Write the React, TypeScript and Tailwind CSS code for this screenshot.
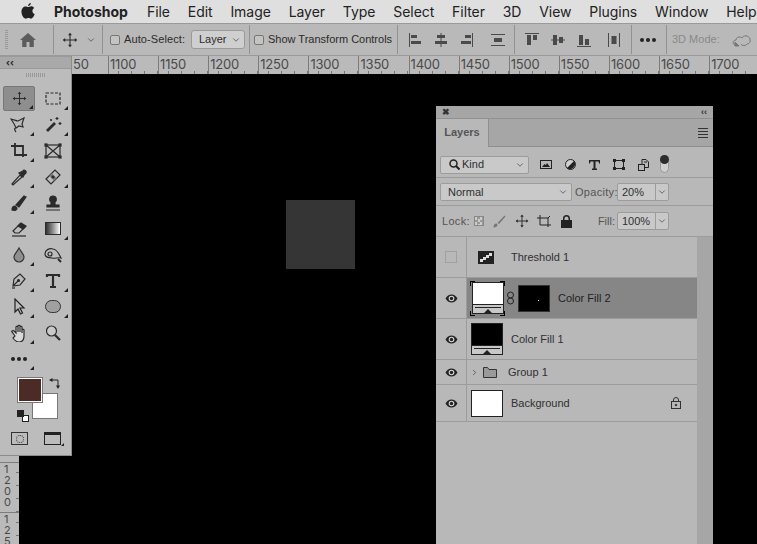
import type { ReactNode } from "react";
import { ChevronDown, ChevronRight } from "lucide-react";

const menuItems = ["File", "Edit", "Image", "Layer", "Type", "Select", "Filter", "3D", "View", "Plugins", "Window", "Help"];
const rulerLabels = ["1100", "1150", "1200", "1250", "1300", "1350", "1400", "1450", "1500", "1550", "1600", "1650", "1700"];

function Svg({ size = 18, className, children }: { size?: number; className?: string; children: ReactNode }) {
  return (
    <svg width={size} height={size} viewBox="0 0 18 18" fill="none" stroke="#2b2b2b" strokeWidth="1.2" className={className}>
      {children}
    </svg>
  );
}

function MoveIcon({ size = 18 }: { size?: number }) {
  return (
    <Svg size={size}>
      <path d="M9 2v14M2 9h14" />
      <path d="M9 .8 6.800 3.600h4.400zM9 17.200l-2.200-2.800h4.400zM.8 9l2.800-2.200v4.400zM17.200 9l-2.800-2.200v4.400z" fill="#2b2b2b" stroke="none" />
    </Svg>
  );
}

function Divider({ ml, mr }: { ml: string; mr: string }) {
  return <span className={`h-[29px] w-px bg-[#929292] ${ml} ${mr}`} />;
}

function Checkbox() {
  return <span className="h-[10px] w-[10px] rounded-[2px] border border-[#777] bg-[#c4c4c4]" />;
}

function AlignIcon({ children, className }: { children: ReactNode; className?: string }) {
  return (
    <svg width={16} height={16} viewBox="0 0 16 16" fill="#4a4a4a" stroke="none" className={className}>
      {children}
    </svg>
  );
}

function Dots() {
  return (
    <span className="flex gap-[2px]">
      <i className="h-[4px] w-[4px] rounded-full bg-[#222]" />
      <i className="h-[4px] w-[4px] rounded-full bg-[#222]" />
      <i className="h-[4px] w-[4px] rounded-full bg-[#222]" />
    </span>
  );
}

function MenuBar() {
  return (
    <div className="flex h-[23px] shrink-0 items-center bg-[#dfdfdf] text-[14px] text-[#222] [&>*]:shrink-0">
      <svg width="14" height="16" viewBox="0 0 15 17" fill="#222" className="ml-[21px] -mt-[2px]">
        <path d="M10.600 0c.1 1.200-1.200 3.200-3 3.200C7.400 1.700 9 .2 10.600 0zM7.700 4.300c.8 0 1.800-.9 3.200-.9 1.300 0 2.500.7 3.200 1.800-2.800 1.700-2.300 5.400.6 6.600-.7 1.900-2.200 4.900-3.900 4.900-1 0-1.500-.7-2.800-.7s-1.800.7-2.800.7C3 16.700.5 12.700.5 9.200c0-3.400 2.100-5.600 4.400-5.600 1.200 0 2.100.7 2.800.7z" />
      </svg>
      <span className="ml-[19px] font-bold">Photoshop</span>
      <div className="ml-[19px] flex gap-[17.850px] tracking-[-0.05px]">
        {menuItems.map((item) => (
          <span key={item}>{item}</span>
        ))}
      </div>
    </div>
  );
}

function OptionsBar() {
  return (
    <div className="flex h-[33px] shrink-0 items-center overflow-hidden border-y border-[#9a9a9a] bg-[#b9b9b9] font-['Liberation_Sans',sans-serif] text-[11px] text-[#2b2b2b] [&>*]:shrink-0">
      <span className="ml-[5px] h-[19px] w-[3px] bg-[repeating-linear-gradient(#999_0_1px,transparent_1px_2px)]" />
      <svg width="16" height="14" viewBox="0 0 16 14" fill="#5c5c5c" className="ml-[12px]">
        <path d="M8 0 0 7h2.200v7h4.300V9h3v5h4.300V7H16z" />
      </svg>
      <Divider ml="ml-[17px]" mr="mr-[8px]" />
      <MoveIcon size={16} />
      <ChevronDown size={10} strokeWidth={1.5} className="ml-[8px] text-[#333]" />
      <Divider ml="ml-[6px]" mr="mr-[7px]" />
      <Checkbox />
      <span className="ml-[4px] w-[60px] whitespace-nowrap tracking-[0.1px]">Auto-Select:</span>
      <div className="ml-[7px] flex h-[19px] w-[54px] items-center justify-between rounded-[3px] border border-[#9a9a9a] bg-[#cfcfcf] pl-[7px] pr-[3px]">
        <span>Layer</span>
        <ChevronDown size={10} strokeWidth={1.5} />
      </div>
      <Divider ml="ml-[4px]" mr="mr-[4px]" />
      <Checkbox />
      <span className="ml-[4px] w-[123px] whitespace-nowrap">Show Transform Controls</span>
      <Divider ml="ml-[6px]" mr="mr-[10px]" />
      <div className="flex items-center gap-[9px]">
        <AlignIcon><path d="M1 1h1v14H1zM3 3h6v3H3zM3 9h10v3H3z" /></AlignIcon>
        <AlignIcon><path d="M7.500 1h1v14h-1zM4 3h8v3H4zM2 9h12v3H2z" /></AlignIcon>
        <AlignIcon><path d="M14 1h1v14h-1zM7 3h6v3H7zM3 9h10v3H3z" /></AlignIcon>
        <AlignIcon className="ml-[7px]"><path d="M1 2h14v1H1zM1 13h14v1H1zM4 6h8v4H4z" /></AlignIcon>
      </div>
      <Divider ml="ml-[8px]" mr="mr-[9px]" />
      <div className="flex items-center gap-[10px]">
        <AlignIcon><path d="M1 1h14v1H1zM3 3h4v10H3zM9 3h4v5H9z" /></AlignIcon>
        <AlignIcon><path d="M1 7.500h14v1H1zM3 3h4v10H3zM9 5h4v6H9z" /></AlignIcon>
        <AlignIcon><path d="M1 14h14v1H1zM3 3h4v10H3zM9 7h4v6H9z" /></AlignIcon>
        <AlignIcon className="ml-[4px]"><path d="M2 1h1v14H2zM13 1h1v14h-1zM5.500 4h5v8h-5z" /></AlignIcon>
      </div>
      <Divider ml="ml-[9px]" mr="mr-[8px]" />
      <Dots />
      <Divider ml="ml-[10px]" mr="mr-[5px]" />
      <span className="whitespace-nowrap text-[#8a8a8a]">3D Mode:</span>
      <svg width="20" height="16" viewBox="0 0 20 16" fill="none" stroke="#777" className="ml-[12px]">
        <path d="M3 13c-3-1-2-5 1-5 0-3 4-4 6-2 1-3 7-3 8 1 1 3-1 5-3 5-1 2-5 2-6 0" />
        <path d="M3 10v4h4z" fill="#777" />
      </svg>
      <span className="ml-[6px] h-[12px] w-[4px] rounded-full bg-[#777]" />
    </div>
  );
}

function RulerTicks() {
  return (
    <span className="absolute bottom-0 left-[9px] flex w-[40px] justify-between">
      <i className="h-[3px] w-px bg-[#777]" />
      <i className="h-[3px] w-px bg-[#777]" />
      <i className="h-[3px] w-px bg-[#777]" />
      <i className="h-[3px] w-px bg-[#777]" />
    </span>
  );
}

function TopRuler() {
  return (
    <div className="flex h-[18px] shrink-0 items-stretch overflow-hidden bg-[#bababa] pl-[73px] text-[#4a4a4a]">
      <div className="flex h-full w-[35px] shrink-0 items-start">
        <span className="text-[13px] leading-[17px] tracking-[-0.2px]">50</span>
      </div>
      {rulerLabels.map((label) => (
        <div key={label} className="relative flex h-full w-[50.100px] shrink-0 border-l border-[#7c7c7c] pl-[1px]">
          <span className="text-[13px] leading-[17px] tracking-[-0.2px]">{label}</span>
          <RulerTicks />
        </div>
      ))}
    </div>
  );
}

function LeftRuler() {
  const digits = (text: string) => (
    <div className="relative h-[50px] shrink-0 border-t border-[#7c7c7c] pl-[4px] pt-[1px] text-[11px] leading-[11px]">
      {text.split("").map((ch, i) => (
        <div key={i}>{ch}</div>
      ))}
      <span className="absolute right-0 top-[9px] flex h-[40px] flex-col justify-between">
        <i className="h-px w-[3px] bg-[#777]" />
        <i className="h-px w-[3px] bg-[#777]" />
        <i className="h-px w-[3px] bg-[#777]" />
        <i className="h-px w-[3px] bg-[#777]" />
      </span>
    </div>
  );
  return (
    <div className="flex w-[19px] shrink-0 flex-col justify-end overflow-hidden bg-[#bababa] text-[#4a4a4a]">
      {digits("1200")}
      <div className="h-[32px] shrink-0 overflow-hidden">{digits("125")}</div>
    </div>
  );
}

function Tool({ children, corner = true, active = false }: { children: ReactNode; corner?: boolean; active?: boolean }) {
  return (
    <div className={`relative flex h-[25px] w-[32px] items-center justify-center rounded-[2px] ${active ? "border border-[#777] bg-[#8e8e8e]" : ""}`}>
      {children}
      {corner && <span className="absolute bottom-[1px] right-[1px] h-0 w-0 border-b-[4px] border-l-[4px] border-b-[#222] border-l-transparent" />}
    </div>
  );
}

function ToolsPanel() {
  return (
    <div className="absolute left-0 top-[56px] h-[400px] w-[72px] border-b border-r border-[#8c8c8c] bg-[#bcbcbc]">
      <div className="flex h-[13px] items-center border-y border-[#9a9a9a] bg-[#a9a9a9] pl-[6px] text-[9px] font-bold leading-none text-[#222]">‹‹</div>
      <div className="mx-auto mt-[4px] h-[4px] w-[19px] bg-[repeating-linear-gradient(90deg,#999_0_1px,transparent_1px_2px)]" />
      <div className="ml-[3px] mt-[9px] grid grid-cols-[32px_32px] gap-x-[2px] gap-y-[1px]">
        <Tool active><MoveIcon size={15} /></Tool>
        <Tool>
          <Svg><rect x="2" y="3" width="14" height="11" strokeDasharray="3 1.5" /></Svg>
        </Tool>
        <Tool>
          <Svg><path d="M1 3c3 .5 5 2 7 2l6-3-2 6 1 3-4-1-3 2c-1-3-3-6-5-9zM5 12c-1 2 0 3 1 4" /></Svg>
        </Tool>
        <Tool>
          <Svg>
            <path d="m3 15 8-8" strokeWidth="2.8" />
            <path d="M13 1v3M11.500 2.500h3M16 6v3M14.500 7.500h3M7 3v2M6 4h2" />
          </Svg>
        </Tool>
        <Tool>
          <Svg><path d="M1 4h12v11M5 1v12h12" strokeWidth="1.8" /></Svg>
        </Tool>
        <Tool corner={false}>
          <Svg>
            <rect x="2" y="3" width="14" height="12" />
            <path d="m2 3 14 12M16 3 2 15" />
            <rect x="1" y="2" width="2" height="2" fill="#2b2b2b" /><rect x="15" y="2" width="2" height="2" fill="#2b2b2b" /><rect x="1" y="14" width="2" height="2" fill="#2b2b2b" /><rect x="15" y="14" width="2" height="2" fill="#2b2b2b" />
          </Svg>
        </Tool>
        <Tool>
          <Svg>
            <path d="m2 16 8-9 2 2-9 8z" fill="#bcbcbc" />
            <path d="m9 5 4 4 1-2 2-2c1-2-2-4-3-2l-2 1z" fill="#2b2b2b" />
          </Svg>
        </Tool>
        <Tool>
          <Svg>
            <path d="m2 11 9-9 5 5-9 9z" />
            <path d="m6.500 6.500 5 5" strokeWidth="3.5" stroke="#777" />
            <circle cx="9" cy="9" r="1" fill="#2b2b2b" />
          </Svg>
        </Tool>
        <Tool>
          <Svg><path d="M2 16c0-3 1-4 3-4l2 2c0 2-2 3-5 2z" fill="#2b2b2b" /><path d="m6 11 8-9 2 1-7 10z" fill="#2b2b2b" /></Svg>
        </Tool>
        <Tool corner={false}>
          <Svg><path d="M2 16h14M3 13h12v-2H11V8c2-1 2-6-2-6S5 7 7 8v3H3z" fill="#2b2b2b" /></Svg>
        </Tool>
        <Tool corner={false}>
          <Svg><path d="m3 11 7-7 5 3-6 6H5z" /><path d="m8 6 3-3 5 3-3 3z" fill="#2b2b2b" /><path d="M2 16h14" /></Svg>
        </Tool>
        <Tool>
          <div className="h-[13px] w-[16px] border border-[#2b2b2b] bg-gradient-to-r from-[#333] to-white" />
        </Tool>
        <Tool>
          <Svg><path d="M9 2c-2 4-5 6-5 9a5 5 0 0 0 10 0c0-3-3-5-5-9z" fill="#8f8f8f" stroke="#333" /></Svg>
        </Tool>
        <Tool corner={false}>
          <Svg><path d="M1 8c0-4 4-6 8-5 4 0 6 5 8 9-3-1-6 1-9 0-3 0-7-1-7-4z" /><circle cx="6" cy="8" r="2" /><path d="m14 13 3 3" strokeWidth="2" /></Svg>
        </Tool>
        <Tool>
          <Svg><path d="m3 14 1-7 6-5 5 5-5 6zM3 14l5-5" /><path d="M2 16h3" /><circle cx="8.500" cy="8.500" r="1" fill="#2b2b2b" /></Svg>
        </Tool>
        <Tool>
          <Svg><path d="M3 5V3h12v2M9 3v12M6 15h6" strokeWidth="2.2" /></Svg>
        </Tool>
        <Tool>
          <Svg><path d="M5 1v13l3-3 2.500 5 2-1-2.500-5h4z" fill="#bcbcbc" stroke="#222" /></Svg>
        </Tool>
        <Tool>
          <span className="h-[13px] w-[16px] rounded-full border border-[#333] bg-[#a0a0a0]" />
        </Tool>
        <Tool>
          <Svg><path d="M5 12 2 8c-1-1 1-2 2-1l2 2V3c0-1 2-1 2 0v5-6c0-1 2-1 2 0v6-5c0-1 2-1 2 0v6-3c0-1 2-1 2 0v6c0 4-2 6-5 6s-4-1-6-4z" fill="#d8d8d8" /></Svg>
        </Tool>
        <Tool corner={false}>
          <Svg><circle cx="7.500" cy="7" r="5" fill="#c9c9c9" /><path d="m11 11 5 5" strokeWidth="2.2" /></Svg>
        </Tool>
        <Tool><Dots /></Tool>
      </div>
      <div className="relative mt-[7px] h-[44px]">
        <span className="absolute left-[32px] top-[15px] h-[26px] w-[26px] border border-[#777] bg-white" />
        <span className="absolute left-[18px] top-0 h-[24px] w-[24px] border border-white bg-[#4c2a26] outline outline-[#777]" />
        <svg width="11" height="11" viewBox="0 0 11 11" fill="none" stroke="#222" className="absolute left-[49px] top-0">
          <path d="M3 2h6v6" />
          <path d="M0 2 3.500 0v4zM9 11 7 7.500h4z" fill="#222" stroke="none" />
        </svg>
        <span className="absolute left-[22px] top-[37px] h-[7px] w-[7px] border border-[#222] bg-white" />
        <span className="absolute left-[17px] top-[32px] h-[7px] w-[7px] bg-[#222]" />
      </div>
      <div className="ml-[11px] mt-[10px] flex items-center gap-[16px]">
        <span className="flex h-[13px] w-[17px] items-center justify-center border border-[#333]">
          <i className="h-[8px] w-[8px] rounded-full border border-dotted border-[#333]" />
        </span>
        <span className="relative h-[13px] w-[17px] border border-t-[3px] border-[#222]">
          <i className="absolute -bottom-[2px] -right-[4px] h-0 w-0 border-b-[3px] border-l-[3px] border-b-[#222] border-l-transparent" />
        </span>
      </div>
    </div>
  );
}

function Eye() {
  return (
    <svg width="13" height="9" viewBox="0 0 13 9" className="ml-[1px]">
      <path d="M.5 4.500C2 2 4 .5 6.500.5s4.500 1.500 6 4c-1.500 2.500-3.500 4-6 4s-4.500-1.500-6-4z" fill="#222" />
      <circle cx="6.500" cy="4.500" r="2.800" fill="#d8d8d8" />
      <circle cx="6.500" cy="4.500" r="1.700" fill="#222" />
    </svg>
  );
}

function FillThumb({ fill }: { fill: string }) {
  return (
    <div className="flex h-[32px] w-[32px] flex-col border border-[#222] bg-[#c8c8c8]">
      <div className={`h-[22px] shrink-0 border-b border-[#222] ${fill}`} />
      <div className="mx-[2px] mt-[2px] h-px shrink-0 bg-[#222]" />
      <svg width="8" height="4" viewBox="0 0 8 4" fill="#222" className="mx-auto mt-[1px] shrink-0">
        <path d="M4 0 8 4H0z" />
      </svg>
    </div>
  );
}

function LayerRow({ h, eye = true, selected = false, children }: { h: string; eye?: boolean; selected?: boolean; children: ReactNode }) {
  return (
    <div className={`flex ${h} border-b border-[#9c9c9c] ${selected ? "bg-[#868686]" : ""}`}>
      <div className="flex w-[31px] items-center justify-center border-r border-[#9c9c9c] bg-[#b8b8b8]">
        {eye ? <Eye /> : <span className="h-[12px] w-[12px] border border-[#a0a0a0]" />}
      </div>
      <div className="flex flex-1 items-center">{children}</div>
    </div>
  );
}

function LayersPanel() {
  return (
    <div className="absolute left-[436px] top-[106px] flex h-[438px] w-[277px] flex-col rounded-t-[3px] bg-[#b8b8b8] font-['Liberation_Sans',sans-serif] text-[11px] text-[#303030]">
      <div className="flex h-[13px] shrink-0 items-center justify-between border-b border-[#909090] bg-[#a6a6a6] px-[6px] text-[9px] font-bold leading-none text-[#333]">
        <span>✖</span>
        <span>‹‹</span>
      </div>
      <div className="flex h-[28px] shrink-0 border-b border-[#8f8f8f] bg-[#a6a6a6]">
        <div className="-mb-px flex w-[53px] items-center justify-center border-r border-[#8f8f8f] bg-[#b8b8b8] pb-[2px] font-bold text-[#555]">Layers</div>
        <div className="ml-auto mr-[5px] flex flex-col justify-center gap-[2px]">
          <i className="h-px w-[10px] bg-[#333]" />
          <i className="h-px w-[10px] bg-[#333]" />
          <i className="h-px w-[10px] bg-[#333]" />
          <i className="h-px w-[10px] bg-[#333]" />
        </div>
      </div>
      <div className="flex h-[31px] shrink-0 items-center border-b border-[#9c9c9c] pl-[4px] pt-[5px]">
        <div className="flex h-[18px] w-[89px] items-center rounded-[2px] border border-[#9c9c9c] bg-[#c9c9c9] pl-[8px] pr-[3px]">
          <svg width="11" height="11" viewBox="0 0 11 11" fill="none" stroke="#222" strokeWidth="1.5">
            <circle cx="4.500" cy="4.500" r="3.500" />
            <path d="m7 7 3.500 3.500" strokeWidth="2" />
          </svg>
          <span className="ml-[2px]">Kind</span>
          <ChevronDown size={10} strokeWidth={1.5} className="ml-auto" />
        </div>
        <div className="ml-[11px] flex items-center gap-[13px]">
          <svg width="12" height="9" viewBox="0 0 12 9" fill="none" stroke="#222"><rect x=".5" y=".5" width="11" height="8" /><path d="m2 7 2.500-3L6 5l1-2 3 4z" fill="#222" stroke="none" /></svg>
          <svg width="11" height="11" viewBox="0 0 11 11"><circle cx="5.500" cy="5.500" r="5" fill="#d0d0d0" stroke="#222" /><path d="M9 2A5 5 0 0 1 2 9z" fill="#222" /></svg>
          <svg width="11" height="10" viewBox="0 0 11 10" fill="#222"><path d="M0 0h11v3.500h-1L9.500 1.500H6.500v7H8V10H3V8.500h1.500v-7H1.500L1 3.500H0z" /></svg>
          <svg width="12" height="11" viewBox="0 0 12 11" fill="none" stroke="#222"><rect x="1.500" y="1.500" width="9" height="8" /><rect x=".5" y=".5" width="2" height="2" fill="#222" /><rect x="9.500" y=".5" width="2" height="2" fill="#222" /><rect x=".5" y="8.500" width="2" height="2" fill="#222" /><rect x="9.500" y="8.500" width="2" height="2" fill="#222" /></svg>
          <svg width="11" height="12" viewBox="0 0 11 12" fill="none" stroke="#222"><path d="M4 5V.5h4l2.500 2.500v5.500H7" /><rect x=".5" y="5.500" width="6" height="6" /><path d="M6 3h3" /></svg>
        </div>
        <div className="relative -mt-[2px] ml-[11px] flex h-[18px] w-[9px] rounded-full border border-[#999] bg-[#cfcfcf]">
          <i className="absolute -left-px -top-px h-[9px] w-[9px] rounded-full bg-[#2c2c2c]" />
        </div>
      </div>
      <div className="flex h-[28px] shrink-0 items-center border-b border-[#9c9c9c] pl-[4px] pt-[1px]">
        <div className="flex h-[18px] w-[132px] items-center justify-between rounded-[2px] border border-[#9c9c9c] bg-[#c9c9c9] pl-[7px] pr-[3px]">
          <span>Normal</span>
          <ChevronDown size={10} strokeWidth={1.5} />
        </div>
        <span className="ml-[3px] w-[41px] tracking-[0.3px] text-[#555]">Opacity:</span>
        <div className="ml-[1px] flex h-[18px] w-[52px] items-center rounded-[2px] border border-[#9c9c9c] bg-[#c9c9c9]">
          <span className="w-[37px] pl-[4px]">20%</span>
          <span className="flex h-full flex-1 items-center justify-center border-l border-[#9c9c9c]"><ChevronDown size={10} strokeWidth={1.5} /></span>
        </div>
      </div>
      <div className="flex h-[31px] shrink-0 items-center border-b border-[#9c9c9c] pl-[6px]">
        <span className="w-[25px] tracking-[0.3px] text-[#555]">Lock:</span>
        <span className="ml-[7px] h-[10px] w-[10px] border border-[#888] bg-[conic-gradient(#999_25%,#ccc_0_50%,#999_0_75%,#ccc_0)] bg-[length:5px_5px]" />
        <svg width="13" height="13" viewBox="0 0 13 13" fill="#777" className="ml-[9px]"><path d="M.5 12.500c0-3 1-4 3-4l1 1c0 2-1.500 3-4 3zM4.500 8l7-7.500 1 1L6 9z" /></svg>
        <span className="ml-[9px] flex"><MoveIcon size={14} /></span>
        <svg width="14" height="13" viewBox="0 0 14 13" fill="none" stroke="#222" className="ml-[8px]"><path d="M0 3h11v9M3 0v10h11M11 3l2-2" /></svg>
        <svg width="11" height="13" viewBox="0 0 11 13" fill="#222" className="ml-[10px]"><path d="M2 5V3.500a3.500 3.500 0 0 1 7 0V5h2v8H0V5zm1.500 0h4V3.500a2 2 0 0 0-4 0z" fillRule="evenodd" /></svg>
        <span className="ml-auto text-[#555]">Fill:</span>
        <div className="ml-[2px] mr-[44px] flex h-[18px] w-[52px] items-center rounded-[2px] border border-[#9c9c9c] bg-[#c9c9c9]">
          <span className="w-[37px] pl-[4px]">100%</span>
          <span className="flex h-full flex-1 items-center justify-center border-l border-[#9c9c9c]"><ChevronDown size={10} strokeWidth={1.5} /></span>
        </div>
      </div>
      <div className="flex flex-1">
        <div className="flex-1">
          <LayerRow h="h-[41px]" eye={false}>
            <svg width="16" height="13" viewBox="0 0 16 13" className="ml-[11px]">
              <rect width="16" height="13" fill="#222" />
              <path d="M2 11V8h3V6h3V4h3V2h3v3h-3v2H8v2H5v2z" fill="#ddd" />
            </svg>
            <span className="ml-[17px]">Threshold 1</span>
          </LayerRow>
          <LayerRow h="h-[41px]" selected>
            <div className="relative ml-[3px] flex h-[35px] w-[35px] items-center justify-center">
              <FillThumb fill="bg-white" />
              <i className="absolute left-0 top-0 h-[5px] w-[5px] border-l border-t border-black" />
              <i className="absolute right-0 top-0 h-[5px] w-[5px] border-r border-t border-black" />
              <i className="absolute bottom-0 left-0 h-[5px] w-[5px] border-b border-l border-black" />
              <i className="absolute bottom-0 right-0 h-[5px] w-[5px] border-b border-r border-black" />
            </div>
            <svg width="9" height="14" viewBox="0 0 9 14" fill="none" stroke="#222" className="ml-[1px]">
              <rect x="1.500" y="1" width="6" height="6" rx="3" />
              <rect x="1.500" y="7" width="6" height="6" rx="3" />
            </svg>
            <div className="relative ml-[3px] h-[27px] w-[32px] border border-[#333] bg-black">
              <i className="absolute left-[19px] top-[14px] h-px w-px bg-white" />
            </div>
            <span className="ml-[8px] text-[#222]">Color Fill 2</span>
          </LayerRow>
          <LayerRow h="h-[41px]">
            <div className="ml-[4px] flex"><FillThumb fill="bg-black" /></div>
            <span className="ml-[8px]">Color Fill 1</span>
          </LayerRow>
          <LayerRow h="h-[25px]">
            <ChevronRight size={9} strokeWidth={1.5} className="ml-[3px] text-[#222]" />
            <svg width="14" height="11" viewBox="0 0 14 11" fill="#9a9a9a" stroke="#333" className="ml-[4px]">
              <path d="M.5 10.500v-10h4l1.500 2h7.500v8z" />
            </svg>
            <span className="ml-[11px]">Group 1</span>
          </LayerRow>
          <LayerRow h="h-[37px]">
            <div className="ml-[4px] h-[27px] w-[32px] border border-[#222] bg-white" />
            <span className="ml-[8px]">Background</span>
            <svg width="10" height="12" viewBox="0 0 10 12" fill="none" stroke="#333" className="ml-auto mr-[16px]">
              <rect x=".5" y="4.500" width="9" height="7" />
              <path d="M2.500 4.500V3a2.500 2.500 0 0 1 5 0v1.500" />
              <circle cx="5" cy="8" r=".8" fill="#333" />
            </svg>
          </LayerRow>
        </div>
        <div className="w-[16px] shrink-0 bg-[#a6a6a6]" />
      </div>
    </div>
  );
}

export default function App() {
  return (
    <div className="relative flex h-[544px] w-[757px] flex-col overflow-hidden bg-black font-['Inter','Liberation_Sans',sans-serif]">
      <MenuBar />
      <OptionsBar />
      <TopRuler />
      <div className="flex min-h-0 flex-1">
        <LeftRuler />
        <div className="relative flex-1 bg-black">
          <div className="absolute left-[267px] top-[126px] h-[69px] w-[69px] bg-[#353535]" />
        </div>
      </div>
      <ToolsPanel />
      <LayersPanel />
    </div>
  );
}
